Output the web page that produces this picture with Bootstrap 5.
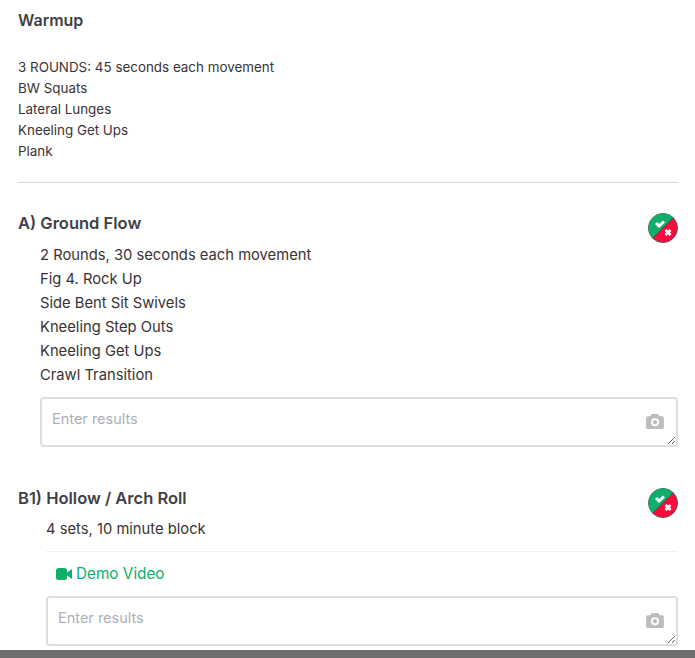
<!DOCTYPE html>
<html lang="en">
<head>
<meta charset="utf-8">
<title>Workout</title>
<link href="https://cdn.jsdelivr.net/npm/bootstrap@5.3.0/dist/css/bootstrap.min.css" rel="stylesheet">
<style>
html,body{height:658px;overflow:hidden;background:#fff}
body{font-family:Inter,"Liberation Sans",sans-serif;color:#3a3335}
.page-wrap{height:650px;padding:0 17px 0 18px;overflow:hidden}
.warm-title{font-size:16px;font-weight:600;color:#3f3f46;line-height:20px;margin:0;padding-top:10px}
.warm-list{font-size:13.4px;line-height:21px;margin:0;padding-top:27px}
.warm-rule{margin:20px 0 0;border-color:#d9d9d9;opacity:1}
.move-head{font-size:16.5px;font-weight:600;color:#3f3f46;line-height:20px;margin:0}
.move-a{padding-top:30px}
.move-b{padding-top:41px}
.move-body{font-size:14.75px;line-height:24px}
.ind-a{padding-left:22px}
.ind-b{padding-left:28px}
.ind-b .move-body{margin-top:-1px}
.status-ico{width:30px;height:30px;display:block}
.res-box{position:relative}
.ind-a .res-box{margin-top:10px}
.res-input{height:50px;border:2px solid #dedede;border-radius:4px;font-size:14.5px;padding:10px;line-height:20px;color:#333;display:block}
.res-input::placeholder{color:#aeb0b8;opacity:1}
.cam-ico{position:absolute;right:14px;top:17px;width:18px;height:15px}
.soft-rule{margin:10px 0 0;border-color:#efefef;opacity:1}
.demo-link{color:#0fae6b;text-decoration:none;font-size:15.3px;line-height:24px;padding:10px 0 10px 10px}
.bottom-bar{height:8px;background:#6e6e6e}
</style>
</head>
<body>
<main class="page-wrap">
  <h5 class="warm-title">Warmup</h5>
  <div class="warm-list">3 ROUNDS: 45 seconds each movement<br>BW Squats<br>Lateral Lunges<br>Kneeling Get Ups<br>Plank</div>
  <hr class="warm-rule">

  <div class="d-flex justify-content-between align-items-start move-a">
    <h5 class="move-head">A) Ground Flow</h5>
    <svg class="status-ico" viewBox="0 0 30 30"><circle cx="15" cy="15" r="14.500" fill="#ff0a3c" stroke="#555"/><path d="M4.700 25.300A14.500 14.500 0 0 1 25.300 4.700Z" fill="#0fae6b"/><path d="M4.700 25.300 25.300 4.700" stroke="#444" stroke-width=".8"/><path d="M8 10l3 3 5-4.500" fill="none" stroke="#fff" stroke-width="3"/><path d="M17.500 17l5 5M22.500 17l-5 5" fill="none" stroke="#fff" stroke-width="2.600"/></svg>
  </div>
  <div class="ind-a">
    <div class="move-body">2 Rounds, 30 seconds each movement<br>Fig 4. Rock Up<br>Side Bent Sit Swivels<br>Kneeling Step Outs<br>Kneeling Get Ups<br>Crawl Transition</div>
    <div class="res-box">
      <textarea class="form-control res-input" placeholder="Enter results"></textarea>
      <svg class="cam-ico" viewBox="0 0 19 16"><path fill-rule="evenodd" d="M6 0h7l1.500 2.500H17a2 2 0 0 1 2 2V14a2 2 0 0 1-2 2H2a2 2 0 0 1-2-2V4.500a2 2 0 0 1 2-2h2.500ZM9.500 4.500a4.300 4.300 0 1 0 0 8.600 4.300 4.300 0 0 0 0-8.600Zm0 2a2.300 2.300 0 1 1 0 4.600 2.300 2.300 0 0 1 0-4.600Z" fill="#bdbdbd"/></svg>
    </div>
  </div>

  <div class="d-flex justify-content-between align-items-start move-b">
    <h5 class="move-head">B1) Hollow / Arch Roll</h5>
    <svg class="status-ico" viewBox="0 0 30 30"><circle cx="15" cy="15" r="14.500" fill="#ff0a3c" stroke="#555"/><path d="M4.700 25.300A14.500 14.500 0 0 1 25.300 4.700Z" fill="#0fae6b"/><path d="M4.700 25.300 25.300 4.700" stroke="#444" stroke-width=".8"/><path d="M8 10l3 3 5-4.500" fill="none" stroke="#fff" stroke-width="3"/><path d="M17.500 17l5 5M22.500 17l-5 5" fill="none" stroke="#fff" stroke-width="2.600"/></svg>
  </div>
  <div class="ind-b">
    <div class="move-body">4 sets, 10 minute block</div>
    <hr class="soft-rule">
    <a class="demo-link d-flex align-items-center gap-1" href="#"><svg width="16" height="12" viewBox="0 0 16 12"><rect width="11" height="12" rx="2.500" fill="#0fae6b"/><path d="M11 4.500 16 1v10l-5-3.500Z" fill="#0fae6b"/></svg>Demo Video</a>
    <div class="res-box">
      <textarea class="form-control res-input" placeholder="Enter results"></textarea>
      <svg class="cam-ico" viewBox="0 0 19 16"><path fill-rule="evenodd" d="M6 0h7l1.500 2.500H17a2 2 0 0 1 2 2V14a2 2 0 0 1-2 2H2a2 2 0 0 1-2-2V4.500a2 2 0 0 1 2-2h2.500ZM9.500 4.500a4.300 4.300 0 1 0 0 8.600 4.300 4.300 0 0 0 0-8.600Zm0 2a2.300 2.300 0 1 1 0 4.600 2.300 2.300 0 0 1 0-4.600Z" fill="#bdbdbd"/></svg>
    </div>
  </div>
</main>
<div class="bottom-bar"></div>
<script src="https://cdn.jsdelivr.net/npm/bootstrap@5.3.0/dist/js/bootstrap.bundle.min.js"></script>
</body>
</html>
